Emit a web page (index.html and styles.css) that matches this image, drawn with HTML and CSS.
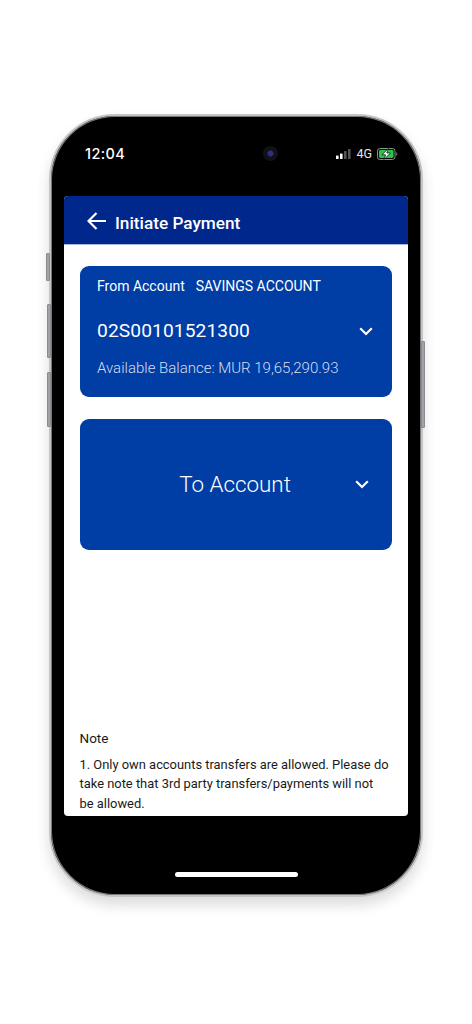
FILE: index.html
```html
<!DOCTYPE html>
<html lang="en">
<head>
<meta charset="utf-8">
<title>Initiate Payment</title>
<link rel="stylesheet" href="styles.css">
</head>
<body>
<div class="phone">
  <span class="btn btn-mute"></span>
  <span class="btn btn-up"></span>
  <span class="btn btn-down"></span>
  <span class="btn btn-power"></span>
  <div class="bezel">
    <div class="status">
      <span class="time">12:04</span>
      <span class="camera"></span>
      <div class="status-right">
        <svg class="signal" width="15" height="10" viewBox="0 0 15 10"><rect x="0" y="6.5" width="2.6" height="3.5" rx=".6" fill="#fff"/><rect x="4" y="4.5" width="2.6" height="5.5" rx=".6" fill="#fff"/><rect x="8" y="2" width="2.6" height="8" rx=".6" fill="#555"/><rect x="12" y="0" width="2.6" height="10" rx=".6" fill="#555"/></svg>
        <span class="net">4G</span>
        <svg class="battery" width="21" height="12" viewBox="0 0 21 12"><rect x=".5" y=".5" width="17.5" height="11" rx="2.6" fill="none" stroke="#7d9c82"/><rect x="2" y="2" width="14.5" height="8" rx="1.4" fill="#2fc24d"/><path d="M19.2 4.2c.8.3 1.2 1 1.2 1.8s-.4 1.5-1.2 1.8z" fill="#777"/><path d="M11.4.4 5 6.8h3.6L7 11.6l6.4-6.6H9.8z" fill="#fff" stroke="#000" stroke-width=".7"/></svg>
      </div>
    </div>
    <main class="screen">
      <header class="topbar">
        <svg class="back" width="20" height="18" viewBox="0 0 20 18"><path d="M9.5 1 1.5 9l8 8M1.5 9H19" fill="none" stroke="#fff" stroke-width="2.2"/></svg>
        <h1 class="title">Initiate Payment</h1>
      </header>
      <div class="content">
        <section class="card card-from">
          <div class="from-label"><span>From Account</span><span>SAVINGS ACCOUNT</span></div>
          <div class="account-row">
            <span class="account-no">02S00101521300</span>
            <svg class="chevron" width="14" height="9" viewBox="0 0 14 9"><path d="M1.2 1.2 7 7l5.8-5.8" fill="none" stroke="#fff" stroke-width="2.2"/></svg>
          </div>
          <div class="balance">Available Balance: MUR 19,65,290.93</div>
        </section>
        <section class="card card-to">
          <span class="to-label">To Account</span>
          <svg class="chevron" width="14" height="9" viewBox="0 0 14 9"><path d="M1.2 1.2 7 7l5.8-5.8" fill="none" stroke="#fff" stroke-width="2.2"/></svg>
        </section>
        <section class="note">
          <p class="note-title">Note</p>
          <p class="note-body">1. Only own accounts transfers are allowed. Please do take note that 3rd party transfers/payments will not be allowed.</p>
        </section>
      </div>
    </main>
    <div class="home-area"><span class="home-bar"></span></div>
  </div>
</div>
</body>
</html>
```
FILE: styles.css
```css
* { box-sizing: border-box; }
html, body { margin: 0; padding: 0; background: #fff; }
body {
  height: 1024px;
  overflow: hidden;
  padding: 114px 0 0 49px;
  font-family: Roboto, "Liberation Sans", sans-serif;
}
.phone {
  position: relative;
  width: 374px;
  height: 783px;
  border-radius: 66px;
  border: 2px solid #c4c4c6;
  box-shadow: inset 0 0 0 1px #77787c, 0 8px 14px rgba(0, 0, 0, .14);
  background: #000;
}
.btn {
  position: absolute;
  width: 4px;
  background: #a2a3a7;
  border: 1px solid #8a8b8f;
  border-radius: 1px;
}
.btn-mute { left: -5px; top: 137px; height: 28px; }
.btn-up { left: -4px; top: 188px; height: 54px; }
.btn-down { left: -4px; top: 256px; height: 55px; }
.btn-power { right: -4px; top: 225px; height: 87px; }
.bezel {
  display: flex;
  flex-direction: column;
  height: 100%;
  padding: 0 13px;
}
.status {
  height: 80px;
  flex: none;
  display: flex;
  align-items: flex-start;
  padding: 29px 10px 0 21px;
  color: #fff;
}
.time { font-size: 14.5px; font-weight: 500; line-height: 18px; letter-spacing: .4px; font-family: Inter, Roboto, sans-serif; }
.camera {
  width: 15px;
  height: 15px;
  margin: 1px 0 0 138px;
  border-radius: 50%;
  background: radial-gradient(circle, #2e2f78 0 2.5px, #101018 3.5px 7.5px);
}
.status-right {
  display: flex;
  align-items: center;
  margin-left: auto;
  gap: 5px;
  height: 18px;
}
.net { font-size: 12.5px; line-height: 12px; color: #e8e8e8; }
.screen {
  height: 620px;
  flex: none;
  display: flex;
  flex-direction: column;
  background: #fff;
  border-radius: 4px;
  overflow: hidden;
}
.topbar {
  height: 49px;
  flex: none;
  display: flex;
  align-items: center;
  gap: 8px;
  padding: 5px 0 0 23px;
  background: #00278c;
  border-bottom: 1px solid #a9b8dc;
}
.back { margin-top: -3px; }
.title { margin: 0; font-size: 17.2px; font-weight: 500; color: #fff; line-height: 24px; }
.content {
  flex: 1;
  display: flex;
  flex-direction: column;
  padding: 21px 16px 0;
  min-height: 0;
}
.card {
  height: 131px;
  flex: none;
  background: #003da5;
  border-radius: 9px;
  color: #fff;
}
.card-from { padding: 11px 19px 0 17px; }
.from-label {
  display: flex;
  gap: 11px;
  font-size: 14px;
  line-height: 18px;
}
.account-row {
  display: flex;
  align-items: center;
  justify-content: space-between;
  margin-top: 23px;
  height: 26px;
}
.account-no { font-size: 19.2px; line-height: 26px; letter-spacing: .1px; }
.balance {
  margin-top: 14px;
  font-size: 15px;
  line-height: 20px;
  font-weight: 300;
  color: #d6def0;
}
.card-to {
  position: relative;
  margin-top: 22px;
  display: flex;
  align-items: center;
  justify-content: center;
}
.to-label { font-size: 22.4px; font-weight: 300; line-height: 28px; margin: -2px 2px 0 0; }
.card-to .chevron { position: absolute; right: 23px; top: 61px; }
.note { margin: auto 0 0 -0.5px; padding-bottom: 3px; color: #1a1a1a; font-size: 12.9px; }
.note-title { margin: 0 0 7px; line-height: 19px; font-size: 13.5px; }
.note-body { margin: 0; padding-right: 3px; line-height: 19.5px; }
.home-area {
  flex: 1;
  display: flex;
  justify-content: center;
  padding-top: 56px;
}
.home-bar {
  width: 123px;
  height: 5px;
  border-radius: 3px;
  background: #fff;
}
```
